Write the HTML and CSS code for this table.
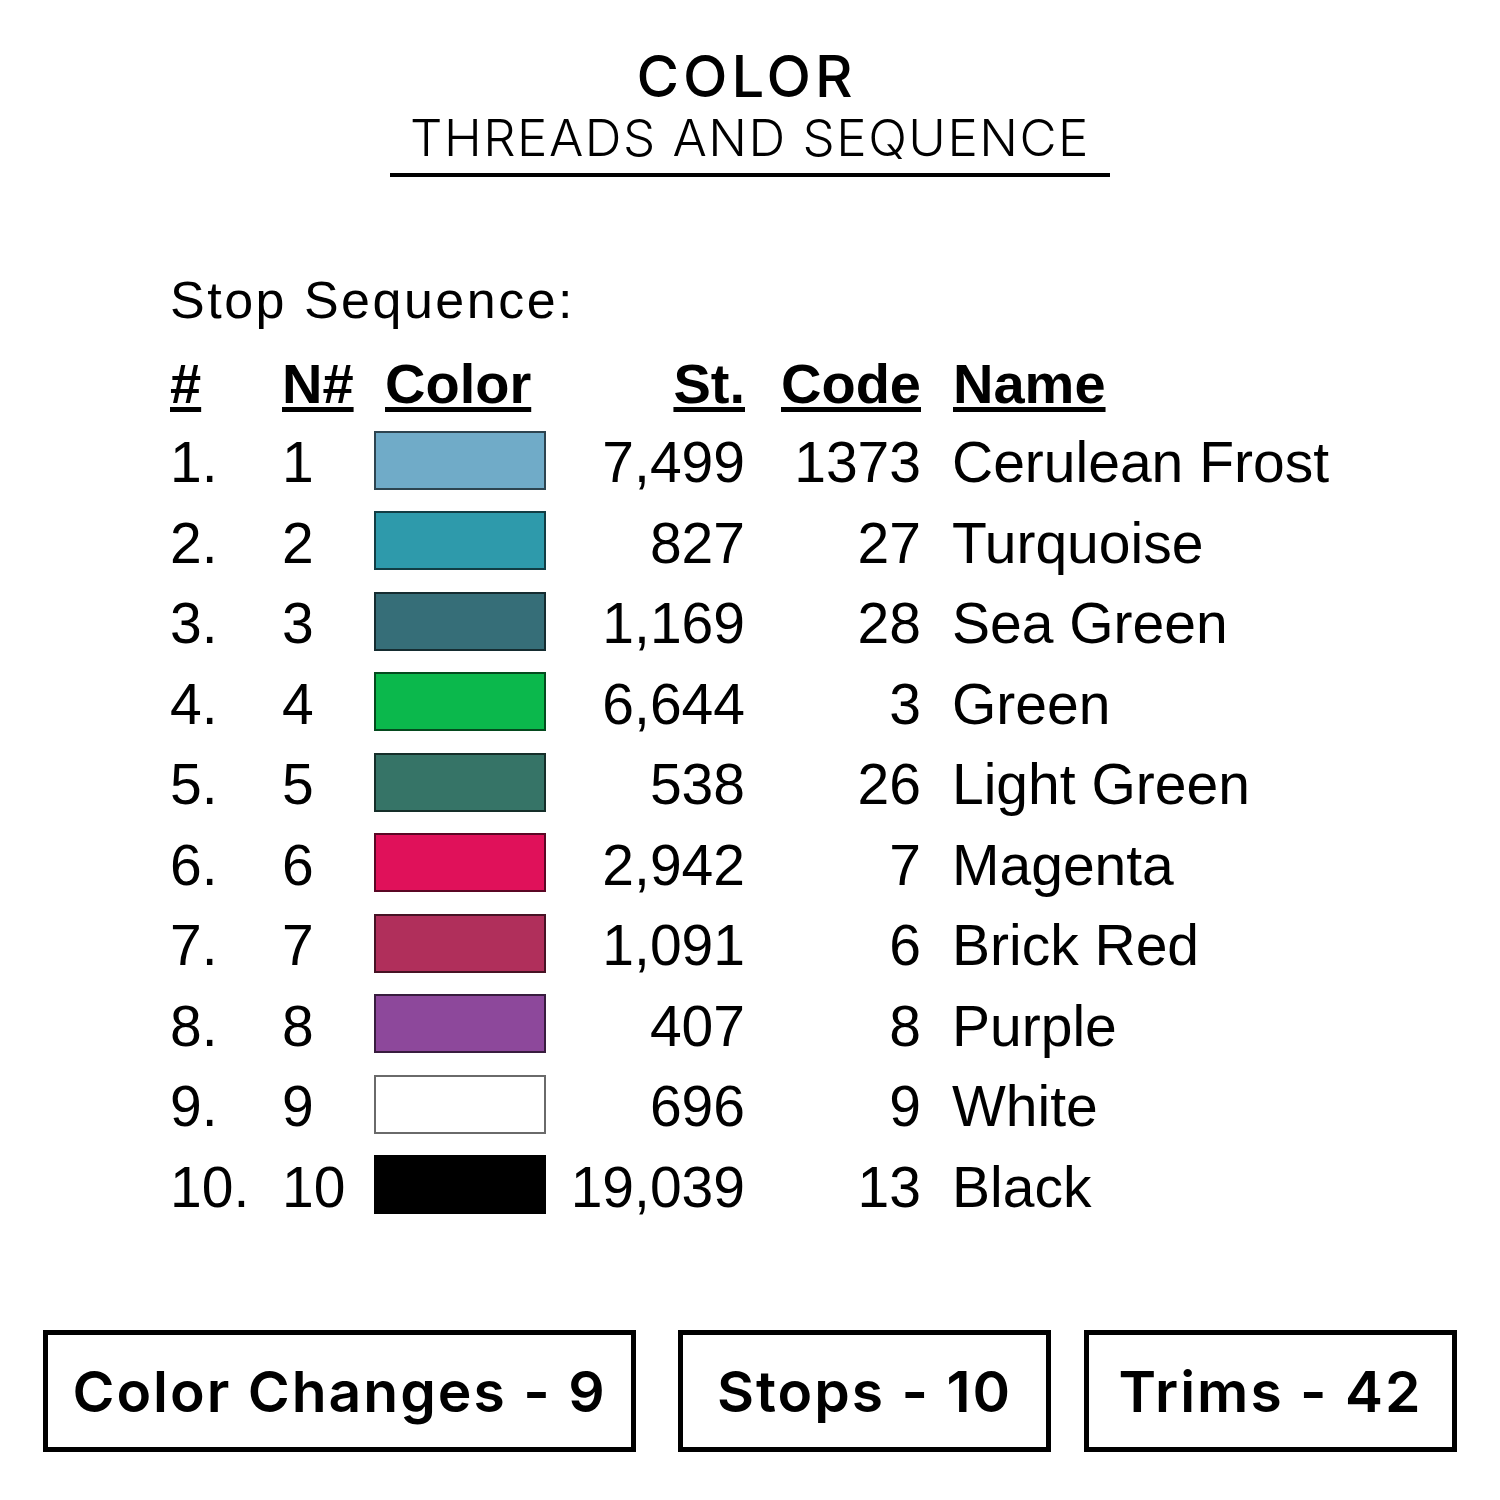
FILE: index.html
```html
<!DOCTYPE html>
<html lang="en">
<head>
<meta charset="utf-8">
<title>Color - Threads and Sequence</title>
<link rel="stylesheet" href="styles.css">
</head>
<body>
<div class="page">
  <header class="title">
    <h1 class="title-main">COLOR</h1>
    <div class="title-sub">THREADS AND SEQUENCE</div>
  </header>

  <section class="sequence">
    <div class="seq-label">Stop Sequence:</div>
    <div class="seq-grid">
      <div class="cell h num"><span class="u">#</span></div>
      <div class="cell h nn"><span class="u">N#</span></div>
      <div class="cell h sw-h"><span class="u">Color</span></div>
      <div class="cell h st"><span class="u">St.</span></div>
      <div class="cell h code"><span class="u">Code</span></div>
      <div class="cell h name"><span class="u">Name</span></div>

      <div class="cell num">1.</div><div class="cell nn">1</div><div class="cell sw"><span class="swatch" style="background:#70abc8"></span></div><div class="cell st">7,499</div><div class="cell code">1373</div><div class="cell name">Cerulean Frost</div>
      <div class="cell num">2.</div><div class="cell nn">2</div><div class="cell sw"><span class="swatch" style="background:#2e9aab"></span></div><div class="cell st">827</div><div class="cell code">27</div><div class="cell name">Turquoise</div>
      <div class="cell num">3.</div><div class="cell nn">3</div><div class="cell sw"><span class="swatch" style="background:#366e78"></span></div><div class="cell st">1,169</div><div class="cell code">28</div><div class="cell name">Sea Green</div>
      <div class="cell num">4.</div><div class="cell nn">4</div><div class="cell sw"><span class="swatch" style="background:#0bb84c"></span></div><div class="cell st">6,644</div><div class="cell code">3</div><div class="cell name">Green</div>
      <div class="cell num">5.</div><div class="cell nn">5</div><div class="cell sw"><span class="swatch" style="background:#367467"></span></div><div class="cell st">538</div><div class="cell code">26</div><div class="cell name">Light Green</div>
      <div class="cell num">6.</div><div class="cell nn">6</div><div class="cell sw"><span class="swatch" style="background:#e0115a"></span></div><div class="cell st">2,942</div><div class="cell code">7</div><div class="cell name">Magenta</div>
      <div class="cell num">7.</div><div class="cell nn">7</div><div class="cell sw"><span class="swatch" style="background:#b02f5b"></span></div><div class="cell st">1,091</div><div class="cell code">6</div><div class="cell name">Brick Red</div>
      <div class="cell num">8.</div><div class="cell nn">8</div><div class="cell sw"><span class="swatch" style="background:#8d489b"></span></div><div class="cell st">407</div><div class="cell code">8</div><div class="cell name">Purple</div>
      <div class="cell num">9.</div><div class="cell nn">9</div><div class="cell sw"><span class="swatch swatch-light" style="background:#ffffff"></span></div><div class="cell st">696</div><div class="cell code">9</div><div class="cell name">White</div>
      <div class="cell num">10.</div><div class="cell nn">10</div><div class="cell sw"><span class="swatch" style="background:#000000"></span></div><div class="cell st">19,039</div><div class="cell code">13</div><div class="cell name">Black</div>
    </div>
  </section>

  <div class="stats">
    <div class="stat stat-changes">Color Changes - 9</div>
    <div class="stat stat-stops">Stops - 10</div>
    <div class="stat stat-trims">Trims - 42</div>
  </div>
</div>
</body>
</html>
```

FILE: styles.css
```css
html, body {
  margin: 0;
  padding: 0;
  background: #ffffff;
}

.page {
  width: 1500px;
  height: 1500px;
  color: #000;
  overflow: hidden;
}

/* Title */
.title {
  display: flex;
  flex-direction: column;
  align-items: center;
  padding-top: 46px;
}

.title-main {
  margin: 0 0 0 -7px;
  font-family: "Inter", "Open Sans", sans-serif;
  font-weight: 500;
  font-size: 58px;
  line-height: 60px;
  letter-spacing: 4px;
}

.title-sub {
  margin-top: 4px;
  padding: 0 20px 7px;
  border-bottom: 4px solid #000;
  font-family: "Inter", "Open Sans", sans-serif;
  font-weight: 300;
  font-size: 51px;
  line-height: 56px;
  letter-spacing: 1.5px;
}

/* Sequence table */
.sequence {
  padding-left: 170px;
  margin-top: 93px;
  font-family: "Liberation Sans", Arial, sans-serif;
}

.seq-label {
  font-size: 52px;
  line-height: 60px;
  letter-spacing: 2.5px;
}

.seq-grid {
  margin-top: 15px;
  display: grid;
  grid-template-columns: 112px 92px 172px 199px 176px auto;
  grid-template-rows: 77px repeat(10, 80.5px);
  font-size: 57px;
}

.cell {
  line-height: 80.5px;
  white-space: nowrap;
}

.cell.h {
  font-weight: bold;
  font-size: 56px;
  line-height: 77px;
}

.u {
  text-decoration: underline;
  text-decoration-thickness: 5px;
  text-underline-offset: 4px;
}

.sw-h { padding-left: 11px; }
.st { text-align: right; }
.code { text-align: right; }
.name { padding-left: 31px; }
.h.name { padding-left: 32px; }

.sw {
  display: flex;
  align-items: center;
  padding-bottom: 4px;
  box-sizing: border-box;
}

.swatch {
  display: block;
  width: 172px;
  height: 59px;
  box-sizing: border-box;
  border: 2px solid rgba(0, 0, 0, 0.6);
}

.swatch-light {
  border-color: #6a6a6a;
}

/* Stats */
.stats {
  display: flex;
  margin-top: 103px;
  padding-left: 43px;
}

.stat {
  box-sizing: border-box;
  height: 122px;
  border: 5px solid #000;
  display: flex;
  align-items: center;
  justify-content: center;
  font-family: "Inter", "Open Sans", sans-serif;
  font-weight: 600;
  font-size: 57px;
  line-height: 1;
  letter-spacing: 2px;
  white-space: nowrap;
}

.stat-changes { width: 593px; }
.stat-stops { width: 373px; margin-left: 42px; }
.stat-trims { width: 373px; margin-left: 33px; }
```
